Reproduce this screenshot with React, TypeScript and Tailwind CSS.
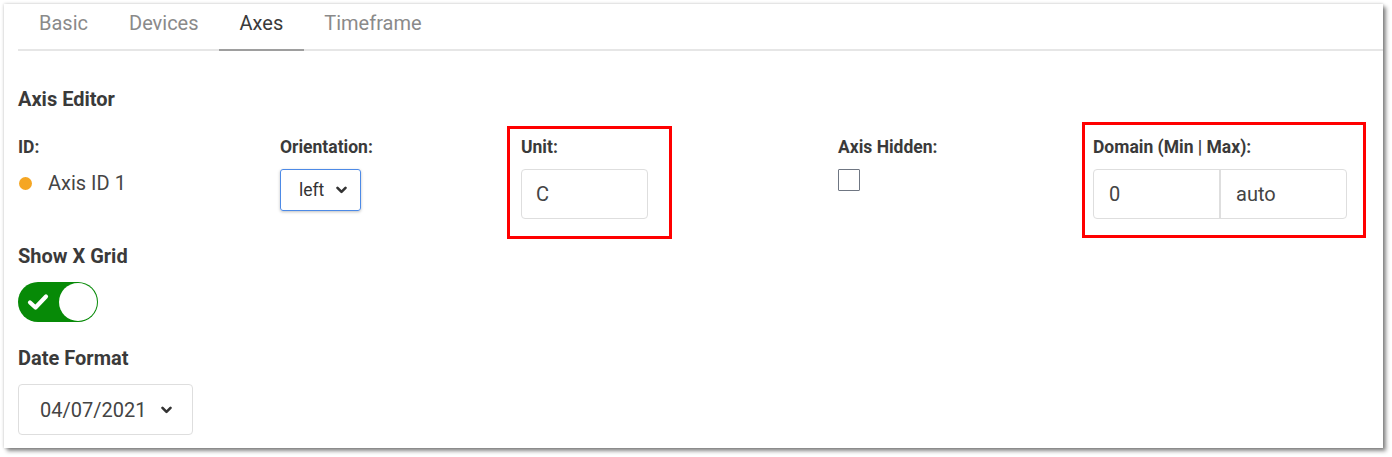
import React from "react";

function Chevron({ className = "" }: { className?: string }) {
  return (
    <svg width="11" height="8" viewBox="0 0 11 8" className={className}>
      <polyline points="1.5,1.8 5.5,5.8 9.5,1.8" fill="none" stroke="#333" strokeWidth="2.6" strokeLinecap="round" strokeLinejoin="round" />
    </svg>
  );
}

export default function App() {
  const tabs = ["Basic", "Devices", "Axes", "Timeframe"];
  return (
    <div className="w-[1392px] h-[457px] bg-white pt-[4px] pl-[4px]" style={{ fontFamily: "Roboto, 'Liberation Sans', sans-serif" }}>
      <div className="w-[1379px] h-[444px] bg-white shadow-[0_0_3px_rgba(0,0,0,0.22),3px_3px_4px_rgba(0,0,0,0.45)]">
        {/* Tabs */}
        <div className="ml-[14px] pl-[0.5px] flex border-b-2 border-[#e6e6e6]">
          {tabs.map((t) => (
            <div
              key={t}
              className={
                t === "Axes"
                  ? "px-[20.5px] pt-[8px] pb-[14px] text-[20px] leading-[23px] text-[#3a3a3a] border-b-2 border-[#9e9e9e] -mb-[2px]"
                  : "px-[20.5px] pt-[8px] pb-[14px] text-[20px] leading-[23px] text-[#8a8a8a]"
              }
            >
              {t}
            </div>
          ))}
        </div>

        <div className="px-[14px]">
          <div className="mt-[37px] text-[20px] leading-[23px] font-bold text-[#3a3a3a]">Axis Editor</div>

          <div className="mt-[26px] grid grid-cols-[262px_241px_317px_255px_1fr] text-[#3a3a3a]">
            {/* ID */}
            <div>
              <div className="text-[17.5px] leading-[20px] font-bold">ID:</div>
              <div className="mt-[15px] flex items-center gap-[16px] text-[20px] leading-[23px] text-[#454545]">
                <span className="ml-[1px] w-[13px] h-[13px] rounded-full bg-[#f5a623]" />
                <span>Axis ID 1</span>
              </div>
            </div>

            {/* Orientation */}
            <div>
              <div className="text-[17.5px] leading-[20px] font-bold">Orientation:</div>
              <div className="mt-[12px] w-[81px] h-[42px] rounded-[3px] border border-[#4d8ae6] shadow-[0_1px_3px_rgba(0,0,0,0.25)] flex items-center pl-[18px] gap-[12px]">
                <span className="text-[17.5px] text-[#333]">left</span>
                <Chevron />
              </div>
            </div>

            {/* Unit */}
            <div>
              <div className="relative w-[127px]">
                <div className="text-[17.5px] leading-[20px] font-bold">Unit:</div>
                <div className="mt-[12px] w-[127px] h-[50px] rounded-[4px] border border-[#dedede] flex items-center pl-[14px] text-[20px] text-[#444]">C</div>
                <div className="absolute -left-[14px] -right-[24px] -top-[11px] -bottom-[20px] border-[3px] border-[#ff0000]" />
              </div>
            </div>

            {/* Axis Hidden */}
            <div>
              <div className="text-[17.5px] leading-[20px] font-bold">Axis Hidden:</div>
              <div className="mt-[12px] w-[22px] h-[22px] border-[1.5px] border-[#6f7682] rounded-[1px] bg-white" />
            </div>

            {/* Domain */}
            <div>
              <div className="relative w-[254px]">
                <div className="text-[17.5px] leading-[20px] font-bold">Domain (Min | Max):</div>
                <div className="mt-[12px] flex h-[50px] w-[254px] rounded-[4px] border border-[#dedede] text-[20px] text-[#444]">
                  <div className="w-[127px] flex items-center pl-[15px] border-r-2 border-[#dedede]">0</div>
                  <div className="flex-1 flex items-center pl-[15px]">auto</div>
                </div>
                <div className="absolute -left-[11px] -right-[19px] -top-[15px] -bottom-[19px] border-[3px] border-[#ff0000]" />
              </div>
            </div>
          </div>

          <div className="mt-[26px] text-[20px] leading-[23px] font-bold text-[#3a3a3a]">Show X Grid</div>
          <div className="mt-[14px] relative w-[80px] h-[40px] rounded-full bg-[#078a07] flex items-center">
            <svg width="24" height="20" viewBox="0 0 24 20" className="ml-[8px]">
              <polyline points="4,10.5 9.5,15.5 20,4.5" fill="none" stroke="white" strokeWidth="4.2" strokeLinecap="round" strokeLinejoin="round" />
            </svg>
            <div className="absolute right-[1px] top-[1px] w-[38px] h-[38px] rounded-full bg-white" />
          </div>

          <div className="mt-[25px] text-[20px] leading-[23px] font-bold text-[#3a3a3a]">Date Format</div>
          <div className="mt-[14px] w-[175px] h-[51px] rounded-[4px] border border-[#dedede] flex items-center pl-[21px] gap-[15px] text-[20px] text-[#444]">
            <span>04/07/2021</span>
            <Chevron />
          </div>
        </div>
      </div>
    </div>
  );
}
